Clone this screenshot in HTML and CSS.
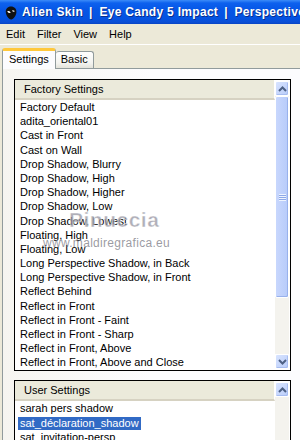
FILE: index.html
```html
<!DOCTYPE html>
<html>
<head>
<meta charset="utf-8">
<title>Eye Candy 5 Impact - Perspective Shadow</title>
<link rel="stylesheet" href="styles.css">
</head>
<body>
<div class="window">
	<div class="titlebar">
		<svg class="app-icon" width="12" height="14" viewBox="0 0 12 14">
			<path d="M6 0.5C2.6 0.5 0.5 3 0.8 6.2 1.1 9.6 3.6 13.3 6.2 13.5 8.6 13.3 11.2 9.8 11.4 6 11.5 2.8 9.3 0.5 6 0.5Z" fill="#111"/>
			<path d="M2.3 5.2C3.6 4.6 5.2 5.2 5.6 6.8 4.2 7.4 2.8 6.8 2.3 5.2Z" fill="#fff"/>
			<path d="M7 4.6C8.1 4 9.3 4.3 9.8 5.2 9.1 6.3 7.8 6.5 7 4.6Z" fill="#cfcfcf"/>
		</svg>
		<span class="title">Alien Skin</span><span class="sep">|</span><span class="title">Eye Candy 5 Impact</span><span class="sep">|</span><span class="title">Perspective Shadow</span>
	</div>
	<div class="menubar">
		<span class="menu">Edit</span>
		<span class="menu">Filter</span>
		<span class="menu">View</span>
		<span class="menu">Help</span>
	</div>
	<div class="tabs">
		<div class="tab active">Settings</div>
		<div class="tab">Basic</div>
	</div>
	<div class="panel">
		<div class="listbox factory">
			<div class="list">
				<div class="list-head">Factory Settings</div>
				<ul class="items">
					<li>Factory Default</li>
					<li>adita_oriental01</li>
					<li>Cast in Front</li>
					<li>Cast on Wall</li>
					<li>Drop Shadow, Blurry</li>
					<li>Drop Shadow, High</li>
					<li>Drop Shadow, Higher</li>
					<li>Drop Shadow, Low</li>
					<li>Drop Shadow, Lowest</li>
					<li>Floating, High</li>
					<li>Floating, Low</li>
					<li>Long Perspective Shadow, in Back</li>
					<li>Long Perspective Shadow, in Front</li>
					<li>Reflect Behind</li>
					<li>Reflect in Front</li>
					<li>Reflect in Front - Faint</li>
					<li>Reflect in Front - Sharp</li>
					<li>Reflect in Front, Above</li>
					<li>Reflect in Front, Above and Close</li>
				</ul>
			</div>
			<div class="scrollbar">
				<div class="sb-btn"><svg width="9" height="6" viewBox="0 0 9 6"><path d="M1 5L4.5 1.5 8 5" fill="none" stroke="#4d6185" stroke-width="2"/></svg></div>
				<div class="sb-track">
					<div class="sb-thumb"><span class="grip"></span></div>
				</div>
				<div class="sb-btn"><svg width="9" height="6" viewBox="0 0 9 6"><path d="M1 1L4.5 4.5 8 1" fill="none" stroke="#4d6185" stroke-width="2"/></svg></div>
			</div>
		</div>
		<div class="watermark">
			<div class="wm-name">Pinuccia</div>
			<div class="wm-url">www.maldiregrafica.eu</div>
		</div>
		<div class="listbox user">
			<div class="list">
				<div class="list-head">User Settings</div>
				<ul class="items">
					<li>sarah pers shadow</li>
					<li><span class="selected">sat_déclaration_shadow</span></li>
					<li>sat_invitation-persp</li>
					<li>sat_perspective</li>
				</ul>
			</div>
			<div class="scrollbar">
				<div class="sb-btn"><svg width="9" height="6" viewBox="0 0 9 6"><path d="M1 5L4.5 1.5 8 5" fill="none" stroke="#4d6185" stroke-width="2"/></svg></div>
				<div class="sb-track plain"></div>
			</div>
		</div>
	</div>
</div>
</body>
</html>
```

FILE: styles.css
```css
*{box-sizing:border-box;}
html,body{margin:0;padding:0;}
body{width:300px;height:440px;overflow:hidden;background:#ECE9D8;font-family:"Liberation Sans",Arial,sans-serif;font-size:11px;color:#000;}

.window{width:300px;height:440px;overflow:hidden;}

/* title bar */
.titlebar{height:24px;display:flex;align-items:center;padding-left:5px;white-space:nowrap;overflow:hidden;
	background:linear-gradient(#3C8CF8 0,#0D61EE 3px,#0556E6 10px,#0453E2 18px,#0A4FD6 22px,#0744C4 24px);}
.app-icon{flex:none;margin:1px 5px 0 0;}
.title,.sep{color:#fff;font-weight:bold;font-size:12px;text-shadow:1px 1px 0 #0A2F8C;flex:none;}
.title{letter-spacing:0.3px;}
.sep{margin:0 7px 0 6px;}

/* menu */
.menubar{height:21px;display:flex;align-items:center;border-bottom:1px solid #fff;}
.menu{padding:0 6px;line-height:20px;}

/* tabs */
.tabs{display:flex;align-items:flex-end;padding:2px 0 0 2px;height:23px;}
.tab{height:17px;line-height:15px;padding:0 5px;border:1px solid #919B9C;border-bottom:none;border-radius:3px 3px 0 0;
	background:linear-gradient(#FFFFFF,#F3F3EF 70%,#E3E2DA);}
.tab.active{height:21px;padding:0 6px;line-height:17px;border-top:3px solid #FFC83C;background:#FCFCFE;
	position:relative;z-index:1;margin-bottom:-1px;}
.tab.active + .tab{border-left:none;}

/* panel */
.panel{position:relative;border:1px solid #919B9C;border-right:none;margin-left:2px;height:380px;
	background:linear-gradient(90deg,#F6F5F0,#FCFCFE 50%,#FCFCFE);padding:10px 0 0 11px;}

.listbox{width:277px;border:1px solid #000;background:#fff;display:flex;}
.factory{height:292px;}
.user{height:80px;margin-top:9px;}
.list{flex:1;min-width:0;}
.list-head{height:20px;line-height:19px;padding-left:9px;background:#EBEADB;border-bottom:2px solid #D6D2C2;border-right:1px solid #fff;}
.items{list-style:none;margin:0;padding:0 0 0 5px;}
.items li{height:14.2px;line-height:14px;white-space:nowrap;}
.user .items li{height:14.5px;}
.selected{background:#316AC5;color:#fff;padding:0 2px;margin-left:-2px;display:inline-block;line-height:13px;}

/* scrollbar */
.scrollbar{width:15px;flex:none;display:flex;flex-direction:column;padding:1px 1px 1px 0;background:#fff;}
.sb-btn{height:15px;flex:none;border:1px solid #fff;border-radius:2px;display:flex;align-items:center;justify-content:center;
	background:linear-gradient(135deg,#D8E4FF,#B9CCF9);box-shadow:inset -1px -1px 0 #A7BDF1;}
.sb-track{flex:1;background:#F4F3EE;display:flex;flex-direction:column;}
.sb-thumb{height:202px;border:1px solid #fff;border-radius:2px;background:linear-gradient(90deg,#C8D7FD,#B7CBFA);
	box-shadow:inset -1px -1px 0 #98B1EC;display:flex;align-items:center;justify-content:center;}
.grip{width:7px;height:7px;background:repeating-linear-gradient(#EEF4FE 0,#EEF4FE 1px,#8DA8E8 1px,#8DA8E8 2px);}

/* watermark over the list */
.watermark{position:absolute;left:40px;top:140px;pointer-events:none;}
.wm-name{margin-left:26px;font-weight:bold;font-size:21px;letter-spacing:0.5px;line-height:22px;
	color:rgba(150,150,162,0.75);-webkit-text-stroke:0.5px rgba(255,255,255,0.8);}
.wm-url{font-size:12px;line-height:12px;color:rgba(110,110,120,0.7);margin-top:6px;letter-spacing:0.3px;}
```
